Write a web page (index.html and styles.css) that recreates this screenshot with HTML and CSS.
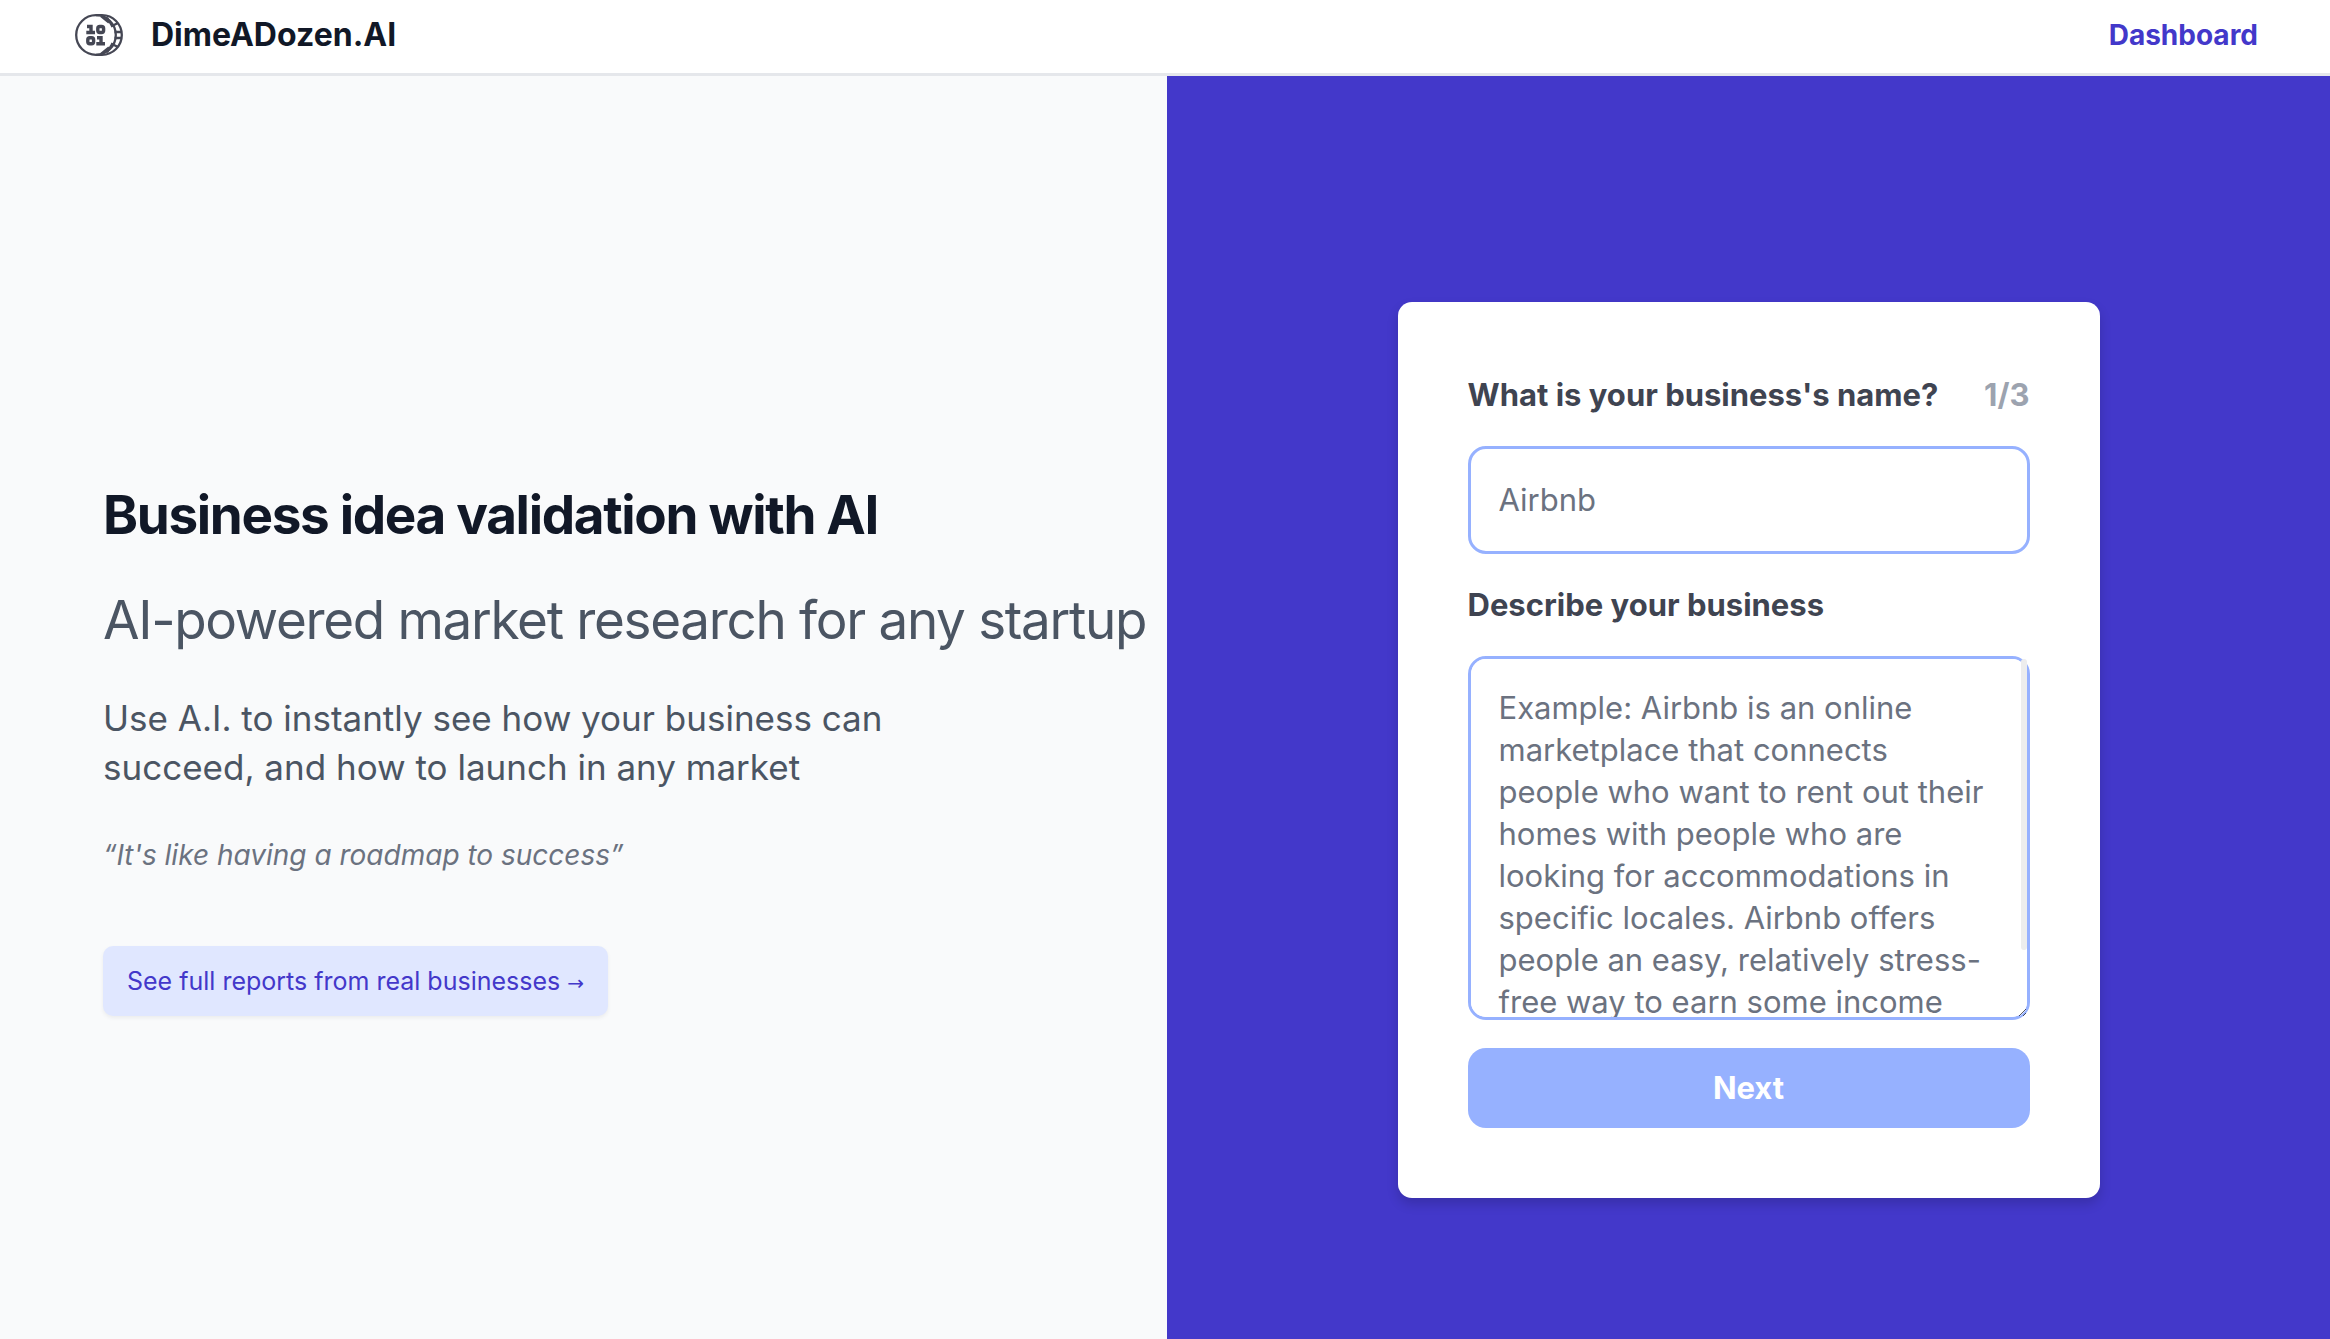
FILE: index.html
```html
<!DOCTYPE html>
<html lang="en">
<head>
  <meta charset="utf-8">
  <meta name="viewport" content="width=device-width, initial-scale=1">
  <title>DimeADozen.AI</title>
  <link rel="stylesheet" href="styles.css">
</head>
<body>
  <header class="site-header">
    <a class="brand" href="#">
      <svg class="brand-logo" viewBox="0 0 48 42" aria-hidden="true">
        <g fill="none" stroke="currentColor" stroke-width="2.3">
          <ellipse cx="21" cy="21" rx="19.800" ry="19.800"/>
          <path d="M21 1.200h6c11 0 19.800 8.900 19.800 19.800s-8.800 19.800-19.800 19.800h-6"/>
          <path d="M26 2l8 6.500M32 3.500l4.500 7.500M36 12.500l7-3.500M39.500 18h7M39.500 24h7M36 29.500l7 3.500M32 38.500l4.500-7.500M26 40l8-6.500"/>
        </g>
        <g fill="none" stroke="currentColor" stroke-width="3.400">
          <path d="M12 12.500h4v6M11.300 18.500h8.700"/>
          <rect x="22.800" y="12.500" width="5.800" height="6" rx="2"/>
          <rect x="12.800" y="23.800" width="5.800" height="6" rx="2"/>
          <path d="M22 23.800h4v6M21.300 29.800h8.700"/>
        </g>
      </svg>
      <span>DimeADozen.AI</span>
    </a>
    <nav>
      <a class="nav-link" href="#">Dashboard</a>
    </nav>
  </header>
  <main class="split">
    <section class="intro">
      <h1 class="title">Business idea validation with AI</h1>
      <h2 class="subtitle">AI-powered market research for any startup</h2>
      <p class="lead">Use A.I. to instantly see how your business can succeed, and how to launch in any market</p>
      <p class="quote">“It's like having a roadmap to success”</p>
      <a class="reports-link" href="#">See full reports from real businesses <span class="arrow">→</span></a>
    </section>
    <section class="form-panel">
      <form class="card">
        <div class="label-row">
          <label for="name">What is your business's name?</label>
          <span class="step">1/3</span>
        </div>
        <input class="field" id="name" type="text" placeholder="Airbnb">
        <label for="description">Describe your business</label>
        <div class="field-scroll">
          <textarea class="field field-long" id="description" placeholder="Example: Airbnb is an online marketplace that connects people who want to rent out their homes with people who are looking for accommodations in specific locales. Airbnb offers people an easy, relatively stress-free way to earn some income from their property."></textarea>
        </div>
        <button class="next" type="button">Next</button>
      </form>
    </section>
  </main>
</body>
</html>
```
FILE: styles.css
```css
* {
  box-sizing: border-box;
}

body {
  margin: 0;
  min-height: 100vh;
  display: flex;
  flex-direction: column;
  font-family: Inter, "Liberation Sans", sans-serif;
  color: #111827;
  background: #f9fafb;
}

h1, h2, p {
  margin: 0;
}

a {
  text-decoration: none;
}

.site-header {
  display: flex;
  align-items: center;
  justify-content: space-between;
  padding: 14px 72px 17px 75px;
  background: #fff;
  border-bottom: 3px solid #e5e7eb;
}

.brand {
  display: flex;
  align-items: center;
  gap: 28px;
  font-size: 32px;
  line-height: 42px;
  font-weight: 700;
  color: #111827;
}

.brand-logo {
  width: 48px;
  height: 42px;
  color: #454754;
}

.nav-link {
  font-size: 28px;
  line-height: 42px;
  font-weight: 700;
  color: #4338ca;
}

.split {
  flex: 1;
  display: grid;
  grid-template-columns: 1167fr 1163fr;
}

.intro {
  display: flex;
  flex-direction: column;
  justify-content: center;
  align-items: flex-start;
  gap: 42px;
  padding: 84px 0 0 103px;
}

.title,
.subtitle {
  font-size: 53px;
  line-height: 63px;
  letter-spacing: -0.025em;
  white-space: nowrap;
}

.title {
  font-weight: 700;
}

.subtitle {
  font-weight: 400;
  color: #4b5563;
}

.lead {
  max-width: 800px;
  font-size: 35px;
  line-height: 49px;
  font-weight: 400;
  color: #4b5563;
}

.quote {
  font-size: 28px;
  line-height: 42px;
  font-style: italic;
  color: #6b7280;
}

.reports-link {
  margin-top: 28px;
  padding: 14px 24px;
  border-radius: 10px;
  font-size: 25px;
  line-height: 42px;
  color: #4338ca;
  background: #e0e7ff;
  box-shadow: 0 2px 4px rgba(0, 0, 0, 0.06);
}

.arrow {
  font-family: "DejaVu Sans", sans-serif;
  font-size: 20px;
  line-height: 1;
}

.form-panel {
  display: flex;
  align-items: center;
  justify-content: center;
  padding-top: 84px;
  background: #4338ca;
}

.card {
  display: flex;
  flex-direction: column;
  gap: 28px;
  width: 702px;
  padding: 70px;
  border-radius: 14px;
  background: #fff;
  box-shadow: 0 6px 12px rgba(0, 0, 0, 0.16);
  font-size: 31px;
  line-height: 46px;
  font-weight: 700;
  color: #3f4451;
}

.label-row {
  display: flex;
  justify-content: space-between;
}

.step {
  color: #9ca3af;
}

.field {
  display: block;
  width: 100%;
  height: 108px;
  padding: 28px;
  border: 3px solid #96b1ff;
  border-radius: 18px;
  background: #fff;
  font: 400 31px/42px Inter, "Liberation Sans", sans-serif;
  color: #111827;
}

.field::placeholder {
  color: #6b7280;
  opacity: 1;
}

.field-scroll {
  position: relative;
}

.field-scroll::after {
  content: "";
  position: absolute;
  top: 3px;
  right: 3px;
  width: 6px;
  height: 80%;
  border-radius: 3px;
  background: #ededed;
}

.field-long {
  height: 364px;
  padding-right: 34px;
  resize: vertical;
}

.next {
  height: 80px;
  border: 0;
  border-radius: 18px;
  font: 700 31px/42px Inter, "Liberation Sans", sans-serif;
  color: #fff;
  background: #96b1ff;
}
```
